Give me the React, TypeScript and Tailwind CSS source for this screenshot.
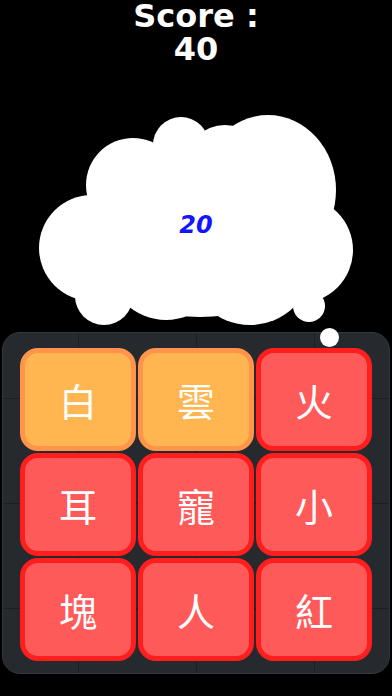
import React from "react";

type Tile = { ch: string; gold?: boolean };

const tiles: Tile[] = [
  { ch: "白", gold: true },
  { ch: "雲", gold: true },
  { ch: "火" },
  { ch: "耳" },
  { ch: "寵" },
  { ch: "小" },
  { ch: "塊" },
  { ch: "人" },
  { ch: "紅" },
];

const Cloud = () => (
  <svg width="392" height="252" viewBox="0 80 392 252" className="block">
    <g fill="#ffffff">
      <ellipse cx="200" cy="245" rx="125" ry="72" />
      <circle cx="92" cy="248" r="53" />
      <circle cx="104" cy="296" r="29" />
      <circle cx="133" cy="185" r="47" />
      <circle cx="181" cy="145" r="28" />
      <circle cx="190" cy="185" r="35" />
      <circle cx="225" cy="165" r="40" />
      <ellipse cx="268" cy="190" rx="68" ry="75" />
      <circle cx="300" cy="250" r="53" />
      <circle cx="166" cy="262" r="58" />
      <circle cx="250" cy="262" r="63" />
      <circle cx="309" cy="306" r="16" />
    </g>
    <text
      x="196"
      y="233"
      textAnchor="middle"
      className="font-['DejaVu_Sans',sans-serif] font-bold italic"
      fontSize="24"
      fill="#1414ff"
    >
      20
    </text>
  </svg>
);

export default function App() {
  return (
    <div className="w-[392px] h-[696px] bg-black overflow-hidden font-['DejaVu_Sans',sans-serif]">
      <div className="h-[80px] flex flex-col items-center text-white font-bold text-[32px] leading-[33px]">
        <span>Score :</span>
        <span>40</span>
      </div>

      <Cloud />

      <div className="relative mx-[2px] h-[342px] rounded-[18px] border border-[#34383d] bg-[#262a2f] bg-[linear-gradient(to_right,#1b1e22_1px,transparent_1px),linear-gradient(to_bottom,#1b1e22_1px,transparent_1px)] bg-[size:118px_105px] bg-[position:75px_65px] px-[17px] pt-[15px]">
        <div className="absolute left-[317px] top-[-5px] w-[19px] h-[19px] rounded-full bg-white" />
        <div className="grid grid-cols-3 gap-[2px]">
          {tiles.map((t, i) => (
            <div
              key={i}
              className={
                t.gold
                  ? "h-[103px] rounded-[18px] border-[5px] border-[#ff944a] bg-[#ffb651] flex items-center justify-center"
                  : "h-[103px] rounded-[18px] border-[5px] border-[#ff1e1e] bg-[#ff5a5a] flex items-center justify-center"
              }
            >
              <span className="text-white text-[38px] leading-none font-['Noto_Sans_CJK_TC','Noto_Sans_CJK_SC',sans-serif]">
                {t.ch}
              </span>
            </div>
          ))}
        </div>
      </div>
    </div>
  );
}
